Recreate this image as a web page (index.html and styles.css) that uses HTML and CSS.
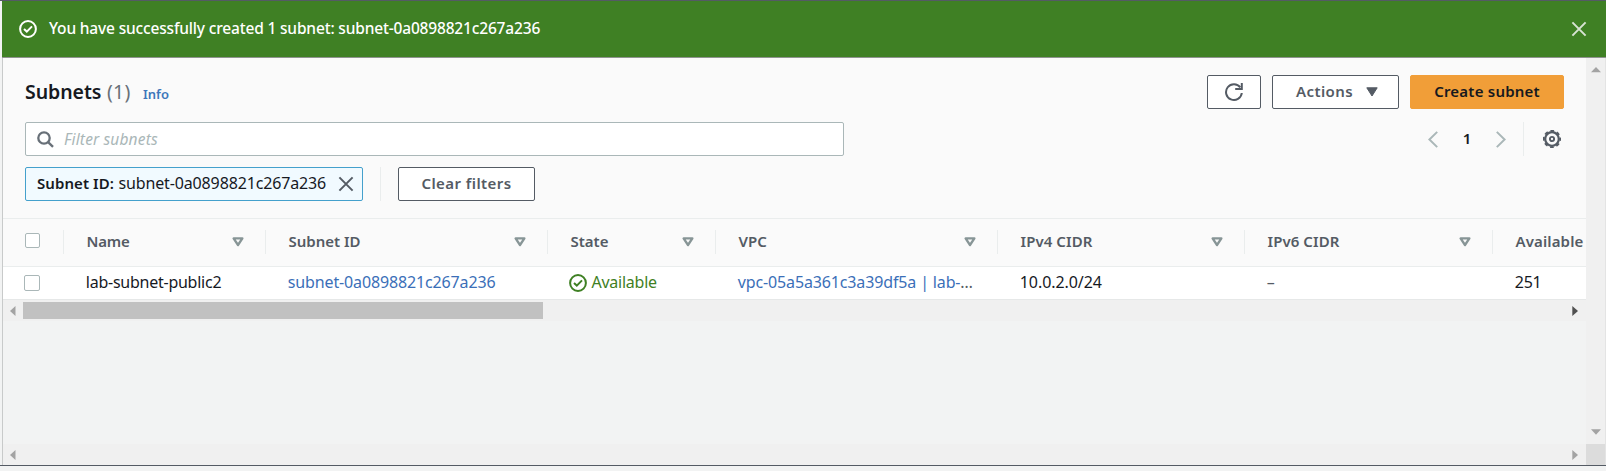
FILE: index.html
```
<!DOCTYPE html>
<html lang="en">
<head>
<meta charset="utf-8">
<title>Subnets</title>
<link rel="stylesheet" href="styles.css">
</head>
<body>
<svg class="defs" width="0" height="0">
  <symbol id="check" viewBox="0 0 18 18"><circle cx="9" cy="9" r="7.9" fill="none" stroke="currentColor" stroke-width="2"/><path d="M5 9l2.8 2.6L13 6.4" fill="none" stroke="currentColor" stroke-width="2"/></symbol>
  <symbol id="close" viewBox="0 0 16 16"><path d="M1.4 1.4l13.2 13.2M14.6 1.4L1.4 14.6" fill="none" stroke="currentColor" stroke-width="2"/></symbol>
  <symbol id="sort" viewBox="0 0 12 10"><path d="M1.6 1.4h8.8L6 8z" fill="none" stroke="currentColor" stroke-width="2.3" stroke-linejoin="round"/></symbol>
</svg>
<div class="window">
  <div class="banner">
    <svg class="icon18"><use href="#check"/></svg>
    <span class="banner-text">You have successfully created 1 subnet: subnet-0a0898821c267a236</span>
    <svg class="banner-close"><use href="#close"/></svg>
  </div>
  <div class="body">
    <main class="content">
      <section class="tools">
        <div class="row">
          <h1>Subnets</h1><span class="count">(1)</span><a class="info">Info</a>
          <div class="actions">
            <button class="btn refresh"><svg width="20" height="20" viewBox="0 0 20 20" fill="none" stroke="currentColor" stroke-width="2"><path d="M17.8 11A7.9 7.9 0 1 1 16.3 5.4"/><path d="M17.8 1v6h-6.6"/></svg></button>
            <button class="btn menu"><span>Actions</span><svg width="12" height="10" viewBox="0 0 12 10"><path d="M.8.8h10.4L6 9z" fill="currentColor" stroke="currentColor" stroke-linejoin="round"/></svg></button>
            <button class="btn create"><span>Create subnet</span></button>
          </div>
        </div>
        <div class="row">
          <div class="search">
            <svg width="17" height="17" viewBox="0 0 17 17" fill="none" stroke="currentColor" stroke-width="2.3"><circle cx="7" cy="7" r="5.7"/><path d="M11.1 11.1l4.9 4.7"/></svg>
            <span>Filter subnets</span>
          </div>
          <div class="pager">
            <svg class="chev" viewBox="0 0 10 17"><path d="M9.2.9L1.4 8.5l7.8 7.6"/></svg>
            <b>1</b>
            <svg class="chev" viewBox="0 0 10 17"><path d="M.8.9l7.8 7.6-7.8 7.6"/></svg>
            <i class="rule"></i>
            <svg class="gear" viewBox="0 0 18 18" fill="none" stroke="currentColor"><circle cx="9" cy="9" r="6.8" stroke-width="2.2"/><circle cx="9" cy="9" r="8.2" stroke-width="1.8" stroke-dasharray="3.6 2.84" stroke-dashoffset="1.8"/><circle cx="9" cy="9" r="2.1" stroke-width="1.9"/></svg>
          </div>
        </div>
        <div class="row chip-row">
          <div class="chip"><b>Subnet ID:</b><span>subnet-0a0898821c267a236</span><svg><use href="#close"/></svg></div>
          <i class="rule"></i>
          <button class="btn clear"><span>Clear filters</span></button>
        </div>
      </section>
      <section class="grid head">
        <div class="sel"><i class="box"></i></div>
        <div class="th t-name"><span>Name</span><svg><use href="#sort"/></svg></div>
        <div class="th"><span>Subnet ID</span><svg><use href="#sort"/></svg></div>
        <div class="th"><span>State</span><svg><use href="#sort"/></svg></div>
        <div class="th"><span>VPC</span><svg><use href="#sort"/></svg></div>
        <div class="th t-cidr"><span>IPv4 CIDR</span><svg><use href="#sort"/></svg></div>
        <div class="th t-cidr"><span>IPv6 CIDR</span><svg><use href="#sort"/></svg></div>
        <div class="th t-avail"><span>Available</span></div>
      </section>
      <section class="grid data">
        <div class="sel"><i class="box"></i></div>
        <div class="td d-name">lab-subnet-public2</div>
        <div class="td link">subnet-0a0898821c267a236</div>
        <div class="td ok"><svg class="icon18"><use href="#check"/></svg><span>Available</span></div>
        <div class="td link">vpc-05a5a361c3a39df5a | lab-<span class="more">…</span></div>
        <div class="td">10.0.2.0/24</div>
        <div class="td"><span class="dash">–</span></div>
        <div class="td d-num">251</div>
      </section>
      <div class="hbar">
        <svg class="arr" viewBox="0 0 6 10"><path d="M5.5 0v10L0 5z"/></svg>
        <i class="thumb"></i>
        <svg class="arr dark" viewBox="0 0 6 10"><path d="M.3 0v10L6 5z"/></svg>
      </div>
      <div class="void"></div>
      <div class="hbar">
        <svg class="arr" viewBox="0 0 6 10"><path d="M5.5 0v10L0 5z"/></svg>
        <svg class="arr" viewBox="0 0 6 10"><path d="M.3 0v10L6 5z"/></svg>
      </div>
    </main>
    <div class="vbar">
      <svg class="varr" viewBox="0 0 10 6"><path d="M0 5.3h10L5 0z"/></svg>
      <svg class="varr" viewBox="0 0 10 6"><path d="M0 .3h10L5 5.7z"/></svg>
      <i class="corner"></i>
    </div>
  </div>
</div>
</body>
</html>
```
FILE: styles.css
```
* { box-sizing: border-box; }
body { margin: 0; height: 471px; overflow: hidden; background: #f2f3f3; font: 15px/20px "Noto Sans", sans-serif; color: #16191f; }
svg { display: block; flex: none; }
.defs { position: absolute; }
.icon18 { width: 18px; height: 18px; }

.window { height: 466px; border-top: 1px solid #545b64; border-bottom: 1px solid #545b64; padding-left: 2px; display: flex; flex-direction: column; }
.banner { height: 57px; flex: none; background: #3f8024; border-bottom: 1px solid #8f938f; color: #fff; display: flex; align-items: center; padding: 0 19px 0 17px; }
.banner-text { margin-left: 12px; font-size: 15.5px; font-weight: 500; letter-spacing: -.17px; padding-bottom: 2px; flex: 1; white-space: nowrap; }
.banner-close { width: 16px; height: 16px; color: #d8e3d4; }

.body { flex: 1; display: flex; min-height: 0; border-left: 1px solid #c8caca; }
.content { width: 1583px; flex: none; display: flex; flex-direction: column; overflow: hidden; }

.tools { height: 161px; flex: none; background: #fafafa; border-bottom: 1px solid #eaeded; padding: 17px 22px 0 22px; display: flex; flex-direction: column; gap: 13px; }
.row { display: flex; height: 34px; align-items: center; }
h1 { margin: 0; font-size: 19.5px; line-height: 26px; font-weight: 600; letter-spacing: -.05px; width: 82px; padding-bottom: 1px; }
.count { font-size: 19.5px; line-height: 26px; color: #687078; width: 25px; padding-bottom: 1px; letter-spacing: .2px; }
.info { font-size: 13px; font-weight: 600; color: #3d77bb; margin-left: 11px; padding-top: 4px; }
.actions { display: flex; gap: 11px; margin-left: auto; }
.btn { height: 34px; border: 1px solid #545b64; border-radius: 2px; background: #fff; color: #545b64; font: 600 15px/20px "Noto Sans", sans-serif; padding: 0; display: flex; align-items: center; justify-content: center; white-space: nowrap; }
.btn span { padding-bottom: 2px; }
.refresh { width: 54px; }
.menu { width: 127px; gap: 13px; letter-spacing: .4px; padding-left: 3px; }
.create { width: 154px; background: #f19e38; border-color: #f19e38; color: #16191f; letter-spacing: .22px; }

.search { width: 819px; height: 34px; border: 1px solid #aab7b8; border-radius: 2px; background: #fff; display: flex; align-items: center; padding-left: 11px; color: #687078; }
.search span { margin-left: 10px; color: #aab7b8; font-size: 15.5px; font-style: italic; letter-spacing: .15px; }
.pager { display: flex; align-items: center; margin-left: auto; height: 34px; }
.pager b { width: 58px; text-align: center; font-weight: 600; padding-bottom: 2px; }
.chev { width: 10px; height: 17px; fill: none; stroke: #aab7b8; stroke-width: 2; }
.rule { width: 1px; height: 34px; background: #eaeded; }
.pager .rule { margin: 0 19px 0 17px; }
.gear { width: 18px; height: 18px; color: #545b64; margin-right: 3px; }

.chip-row { margin-top: -2px; }
.chip { width: 338px; flex: none; height: 34px; border: 1px solid #44a0cc; border-radius: 2px; background: #f1faff; display: flex; align-items: center; padding: 0 8px 0 11px; white-space: nowrap; }
.chip b { font-weight: 600; letter-spacing: .08px; width: 81.5px; padding-bottom: 2px; }
.chip span { font-size: 16px; letter-spacing: -.14px; flex: 1; padding-bottom: 2px; }
.chip svg { width: 16px; height: 16px; color: #545b64; }
.chip-row .rule { margin: 0 17px; }
.clear { width: 137px; letter-spacing: .43px; }

.grid { display: grid; grid-template-columns: 60px 202px 282px 168px 282px 247px 248px 120px; flex: none; }
.head { height: 48px; background: #fafafa; border-bottom: 1px solid #eaeded; align-items: center; }
.data { height: 33px; background: #fff; border-bottom: 1px solid #e6e8e8; align-items: center; }
.sel { padding-left: 22px; }
.box { display: block; width: 15px; height: 15px; border: 1px solid #aab7b8; border-radius: 2px; background: #fff; margin-top: -4px; }
.data .box { width: 16px; height: 16px; margin: -1px 0 0 -1px; }
.th { height: 24px; margin-top: -1px; border-left: 1px solid #eaeded; display: flex; align-items: center; justify-content: space-between; padding: 0 21px 0 22.5px; color: #545b64; font-weight: 600; }
.th span { padding-bottom: 2px; }
.th svg { width: 12px; height: 10px; color: #879596; margin-top: -1px; }
.t-name { letter-spacing: -.2px; }
.t-cidr { letter-spacing: .08px; }
.t-avail { letter-spacing: .13px; padding-right: 0; }
.td { padding: 0 0 2px 22.8px; font-size: 16px; letter-spacing: -.08px; white-space: nowrap; }
.link { color: #3b6fb8; letter-spacing: -.14px; }
.d-name, .ok span { letter-spacing: -.25px; }
.ok { color: #3f8024; display: flex; align-items: center; gap: 4.5px; padding-left: 22px; }
.ok .icon18 { position: relative; top: 1px; }
.more, .dash { color: #545b64; }
.d-num { letter-spacing: -.3px; }

.hbar { height: 21px; flex: none; background: #f0f0f0; display: flex; align-items: center; justify-content: space-between; padding: 0 8px 0 7px; }
.thumb { width: 520px; height: 17px; background: #c1c1c1; margin: 0 auto 1px 7px; }
.arr { width: 6px; height: 10px; fill: #a3a3a3; }
.dark { fill: #505050; }
.void { flex: 1; background: #f2f3f3; }
.vbar { width: 20px; flex: none; background: #f0f0f0; border-right: 1px solid #e4e4e4; display: flex; flex-direction: column; align-items: center; padding-top: 9px; }
.varr { width: 10px; height: 6px; fill: #a3a3a3; }
.varr + .varr { margin-top: auto; margin-bottom: 9px; }
.corner { width: 100%; height: 21px; background: #dcdcdc; }
```
